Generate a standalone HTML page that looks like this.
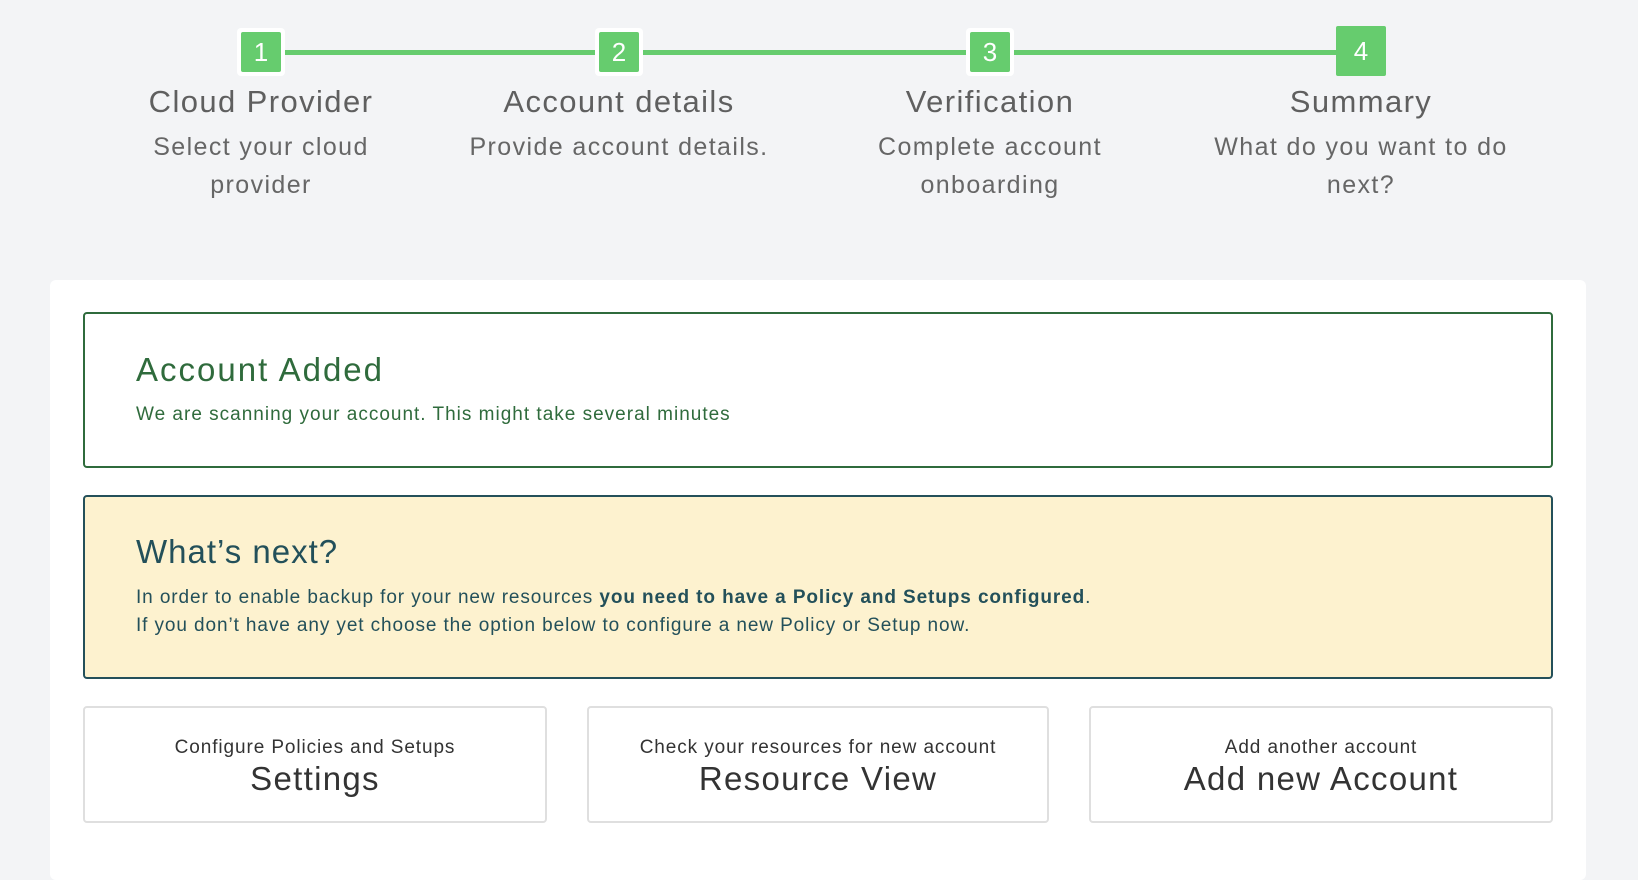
<!DOCTYPE html>
<html><head><meta charset="utf-8"><style>
*{margin:0;padding:0;box-sizing:border-box}
body{width:1638px;height:860px;background:#f3f4f6;font-family:"Liberation Sans",sans-serif;position:relative;overflow:hidden}
.line{position:absolute;top:50px;height:5px;background:#66cc6e;left:261px;width:1100px}
.box{position:absolute;top:28px;width:48px;height:48px;background:#fff;border-radius:4px;display:flex;align-items:center;justify-content:center}
.box span{width:40px;height:40px;background:#66cc6e;color:#fff;font-size:26px;display:flex;align-items:center;justify-content:center;border-radius:2px}
.step{position:absolute;top:81px;width:380px;margin-left:-190px;text-align:center;color:#666}
.step h3{font-weight:normal;font-size:31px;color:#5f5f5f;height:42px;line-height:42px;letter-spacing:1.4px}
.step p{font-size:25px;line-height:38px;margin-top:5px;letter-spacing:1.4px}
.card{position:absolute;left:50px;top:280px;width:1536px;height:600px;background:#fff;border-radius:6px}
.added{position:absolute;left:83px;top:312px;width:1470px;height:156px;border:2px solid #2f6b3c;border-radius:4px;color:#2f6b3c}
.added h2{position:absolute;left:51px;top:37px;font-size:33px;font-weight:normal;letter-spacing:2px}
.added p{position:absolute;left:51px;top:90px;font-size:19px;letter-spacing:1px}
.next{position:absolute;left:83px;top:495px;width:1470px;height:184px;border:2px solid #24505a;border-radius:4px;background:#fdf2cf;color:#23505a}
.next h2{position:absolute;left:51px;top:36px;font-size:33px;font-weight:normal;letter-spacing:1px}
.next p{position:absolute;left:51px;font-size:19px;letter-spacing:0.9px;white-space:nowrap}
.btn{position:absolute;top:706px;height:117px;border:2px solid #dfdfdf;border-radius:4px;text-align:center;color:#333}
.btn small{display:block;font-size:19px;margin-top:29px;letter-spacing:0.9px}
.btn b{display:block;font-size:33px;font-weight:normal;margin-top:1px;letter-spacing:1.3px}
</style></head><body>
<div class="line"></div>
<div class="box" style="left:237px"><span>1</span></div>
<div class="box" style="left:595px"><span>2</span></div>
<div class="box" style="left:966px"><span>3</span></div>
<div class="box" style="left:1336px;top:26px;width:50px;height:50px;background:#66cc6e"><span style="width:50px;height:50px">4</span></div>
<div class="step" style="left:261px;width:340px;margin-left:-170px"><h3>Cloud Provider</h3><p>Select your cloud<br>provider</p></div>
<div class="step" style="left:619px"><h3>Account details</h3><p>Provide account details.</p></div>
<div class="step" style="left:990px;width:340px;margin-left:-170px"><h3>Verification</h3><p>Complete account<br>onboarding</p></div>
<div class="step" style="left:1361px"><h3>Summary</h3><p>What do you want to do<br>next?</p></div>
<div class="card"></div>
<div class="added"><h2>Account Added</h2><p>We are scanning your account. This might take several minutes</p></div>
<div class="next"><h2>What’s next?</h2>
<p style="top:90px">In order to enable backup for your new resources <b>you need to have a Policy and Setups configured</b>.</p>
<p style="top:118px">If you don’t have any yet choose the option below to configure a new Policy or Setup now.</p></div>
<div class="btn" style="left:83px;width:464px"><small>Configure Policies and Setups</small><b>Settings</b></div>
<div class="btn" style="left:587px;width:462px"><small>Check your resources for new account</small><b>Resource View</b></div>
<div class="btn" style="left:1089px;width:464px"><small>Add another account</small><b>Add new Account</b></div>
</body></html>
